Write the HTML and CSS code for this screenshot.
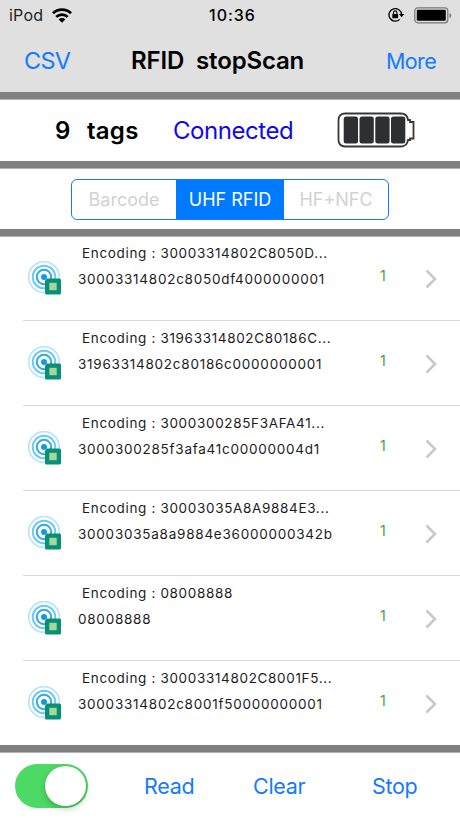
FILE: index.html
```html
<!DOCTYPE html>
<html lang="en">
<head>
<meta charset="utf-8">
<title>RFID</title>
<link rel="stylesheet" href="styles.css">
</head>
<body>
<svg width="0" height="0" class="defs">
  <symbol id="tag" viewBox="0 0 34 34">
    <g fill="none">
      <circle cx="16" cy="16" r="15.300" stroke="#b9e5fb" stroke-width="1.700"/>
      <circle cx="16" cy="16" r="11.300" stroke="#6cc8f4" stroke-width="1.900"/>
      <circle cx="16" cy="16" r="7.200" stroke="#2fa9e6" stroke-width="2"/>
    </g>
    <circle cx="16" cy="16" r="3" fill="#0d9be8"/>
    <path d="M19 17.500h12.500a1.500 1.500 0 0 1 1.500 1.500v13a1.500 1.500 0 0 1-1.500 1.500h-13A1.500 1.500 0 0 1 17 32V19.500z" fill="#098f73"/>
    <rect x="21.300" y="21.800" width="7.400" height="7.400" fill="#a5d69d"/>
  </symbol>
  <symbol id="chev" viewBox="0 0 12 20">
    <path d="M1.500 1.500 10 10l-8.500 8.500" fill="none" stroke="#c7c7cc" stroke-width="2.500"/>
  </symbol>
</svg>
<header class="top">
  <div class="status">
    <span class="device">iPod</span>
    <svg class="wifi" width="20" height="15" viewBox="0 0 20 15">
      <g fill="none" stroke="#000" stroke-width="2.700">
        <path d="M1 5.300a12.800 12.800 0 0 1 18 0"/>
        <path d="M4.200 8.900a8.300 8.300 0 0 1 11.600 0"/>
      </g>
      <path d="M6.700 11.400a4.700 4.700 0 0 1 6.600 0L10 14.700z"/>
    </svg>
    <span class="time">10:36</span>
    <svg class="lock" width="16" height="16" viewBox="0 0 16 16">
      <path d="M11.700 12.400A6.300 6.300 0 1 1 13.600 7.500" fill="none" stroke="#000" stroke-width="1.300"/>
      <path d="M11 7h5.200l-2.600 3.200z"/>
      <rect x="4.300" y="6.900" width="5.800" height="4.400" rx=".6"/>
      <path d="M5.500 7V5.600a1.700 1.700 0 0 1 3.400 0V7" fill="none" stroke="#000" stroke-width="1.100"/>
    </svg>
    <svg class="power" width="39" height="17" viewBox="0 0 39 17">
      <rect x=".8" y=".8" width="33" height="15" rx="3" fill="none" stroke="#777" stroke-width="1.200"/>
      <rect x="2.800" y="2.800" width="29" height="11" rx="1"/>
      <path d="M35.500 6v5q1.800-.5 1.800-2.500T35.500 6z" fill="#777"/>
    </svg>
  </div>
  <nav class="nav">
    <a class="link csv">CSV</a>
    <h1 class="title">RFID <span class="scan">stopScan</span></h1>
    <a class="link more">More</a>
  </nav>
</header>
<div class="bar"></div>
<section class="summary">
  <strong class="count">9</strong>
  <strong class="tags">tags</strong>
  <span class="state">Connected</span>
  <svg class="cells" width="80" height="36" viewBox="0 0 80 36">
    <path d="M8 1.500h56c4 0 6.500 2.700 7 6.500h2v2h3.500v16.500H73v1.500h-2c-.5 4-3 6.500-7 6.500H8c-4 0-6.500-2.500-6.500-6.500V8C1.500 4 4 1.500 8 1.500z" fill="#fff" stroke="#3b3737" stroke-width="1.800"/>
    <g fill="#2d2f30">
      <rect x="6.700" y="4.500" width="14.300" height="27" rx="2.500"/>
      <rect x="22.500" y="4.500" width="14.300" height="27" rx="2.500"/>
      <rect x="38.300" y="4.500" width="14.300" height="27" rx="2.500"/>
      <rect x="54" y="4.500" width="14.300" height="27" rx="2.500"/>
    </g>
  </svg>
</section>
<div class="bar"></div>
<section class="modes">
  <div class="segments">
    <span class="segment">Barcode</span>
    <span class="segment active">UHF RFID</span>
    <span class="segment">HF+NFC</span>
  </div>
</section>
<div class="bar"></div>
<main class="list">
  <article class="row"><svg class="tag"><use href="#tag"/></svg><div class="info"><div class="enc">Encoding : 30003314802C8050D...</div><div class="epc">30003314802c8050df4000000001</div></div><span class="hits">1</span><svg class="chev"><use href="#chev"/></svg></article>
  <article class="row"><svg class="tag"><use href="#tag"/></svg><div class="info"><div class="enc">Encoding : 31963314802C80186C...</div><div class="epc">31963314802c80186c0000000001</div></div><span class="hits">1</span><svg class="chev"><use href="#chev"/></svg></article>
  <article class="row"><svg class="tag"><use href="#tag"/></svg><div class="info"><div class="enc">Encoding : 3000300285F3AFA41...</div><div class="epc">3000300285f3afa41c00000004d1</div></div><span class="hits">1</span><svg class="chev"><use href="#chev"/></svg></article>
  <article class="row"><svg class="tag"><use href="#tag"/></svg><div class="info"><div class="enc">Encoding : 30003035A8A9884E3...</div><div class="epc">30003035a8a9884e36000000342b</div></div><span class="hits">1</span><svg class="chev"><use href="#chev"/></svg></article>
  <article class="row"><svg class="tag"><use href="#tag"/></svg><div class="info"><div class="enc">Encoding : 08008888</div><div class="epc">08008888</div></div><span class="hits">1</span><svg class="chev"><use href="#chev"/></svg></article>
  <article class="row"><svg class="tag"><use href="#tag"/></svg><div class="info"><div class="enc">Encoding : 30003314802C8001F5...</div><div class="epc">30003314802c8001f50000000001</div></div><span class="hits">1</span><svg class="chev"><use href="#chev"/></svg></article>
</main>
<div class="bar"></div>
<footer class="actions">
  <span class="switch"><span class="knob"></span></span>
  <a class="link">Read</a>
  <a class="link">Clear</a>
  <a class="link">Stop</a>
</footer>
</body>
</html>
```
FILE: styles.css
```css
* { box-sizing: border-box; }
body {
  margin: 0;
  width: 460px;
  height: 818px;
  overflow: hidden;
  display: flex;
  flex-direction: column;
  background: #fff;
  color: #000;
  font-family: Inter, "Liberation Sans", sans-serif;
  white-space: nowrap;
}
svg { display: block; flex: none; }
.defs { position: absolute; }
.link { color: #147aff; font-size: 21.500px; line-height: 28px; letter-spacing: -.3px; }
.bar { height: 8px; flex: none; background: linear-gradient(#808080 7px, #b4b4b4 7px); }

.top { height: 92px; flex: none; background: #e0e0e0; }
.status { height: 31px; display: flex; align-items: center; font-size: 16px; }
.device { width: 43px; margin-left: 9px; color: #222; letter-spacing: .2px; }
.wifi { margin-top: -1px; }
.time { width: 50px; margin-left: 137px; margin-top: -1px; font-weight: 500; letter-spacing: 1px; }
.device { margin-top: -1px; }
.lock { margin-left: 129px; margin-top: -1px; }
.power { margin-left: 10px; margin-top: -1px; }
.nav { height: 59px; display: grid; grid-template-columns: 131px 255px 1fr; align-items: center; }
.csv { padding-left: 24px; font-size: 23.500px; letter-spacing: -.7px; }
.more { letter-spacing: -.6px; }
.title { margin: 0; font-size: 24px; font-weight: 600; letter-spacing: -.15px; }
.scan { margin-left: 6px; }

.summary { height: 61px; flex: none; display: flex; align-items: center; font-size: 24px; }
.count { width: 32px; margin-left: 55px; font-weight: 600; }
.tags { width: 86px; font-weight: 600; letter-spacing: .25px; }
.state { width: 164px; color: #1208e8; letter-spacing: -.45px; }
.cells { margin-top: -1px; }
.modes { height: 60px; padding-top: 1px; flex: none; display: flex; align-items: center; justify-content: center; }
.segments { display: grid; grid-template-columns: 104px 108px 104px; width: 318px; height: 41px; border: 1.500px solid #147aff; border-radius: 6px; overflow: hidden; font-size: 18px; line-height: 40px; text-align: center; color: #d2d2d2; }
.active { background: #007aff; color: #fff; }

.list { height: 509px; margin-top: -1px; flex: none; display: grid; grid-template-rows: repeat(6, 85px); padding-left: 23px; overflow: hidden; }
.row { display: grid; grid-template-columns: 55px 302px 44px 1fr; align-items: start; border-bottom: 1px solid #d9d9db; color: #1c1c1c; }
.tag { width: 34px; height: 34px; margin: 25px 0 0 5px; }
.info { padding-top: 8px; font-size: 13.500px; line-height: 18px; }
.enc { padding-left: 4px; letter-spacing: .66px; }
.epc { margin-top: 8px; letter-spacing: .75px; }
.hits { margin-top: 31px; font-size: 14px; line-height: 18px; color: #38a548; }
.chev { width: 12px; height: 20px; margin: 33px 0 0 1px; }

.actions { height: 65px; flex: none; display: grid; grid-template-columns: 144px 109px 119px 1fr; align-items: center; }
.switch { width: 73px; height: 44px; margin-left: 15px; padding: 2px; border-radius: 22px; background: #4cd964; display: flex; justify-content: flex-end; }
.knob { width: 41px; height: 40px; border-radius: 50%; background: #fff; box-shadow: 0 3px 6px #0003, 0 0 1px #0003; }
```
